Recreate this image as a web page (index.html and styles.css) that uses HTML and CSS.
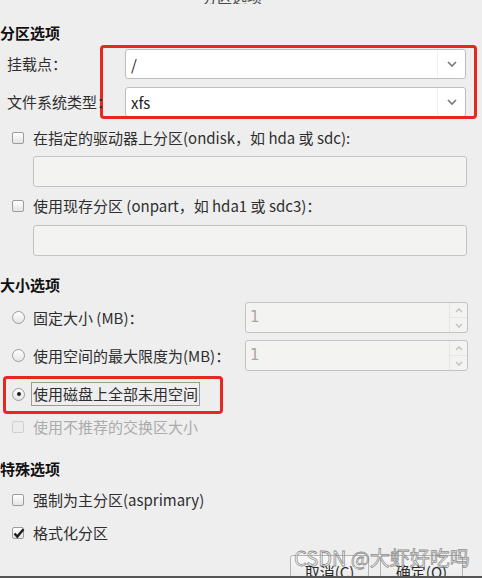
FILE: index.html
```html
<!DOCTYPE html>
<html lang="zh-CN">
<head>
<meta charset="utf-8">
<title>分区选项</title>
<link rel="stylesheet" href="styles.css">
</head>
<body>
<div class="window">
  <div class="title"><span>分区选项</span></div>

  <div class="heading h-part">分区选项</div>
  <div class="form">
    <div class="flabel">挂载点：</div>
    <div class="combo"><span class="cv">/</span><span class="carrow"><svg width="10" height="6" viewBox="0 0 10 6"><path d="M1 1 L5 5 L9 1" fill="none" stroke="#7a7a7a" stroke-width="1.7"/></svg></span></div>
    <div class="flabel">文件系统类型：</div>
    <div class="combo"><span class="cv">xfs</span><span class="carrow"><svg width="10" height="6" viewBox="0 0 10 6"><path d="M1 1 L5 5 L9 1" fill="none" stroke="#7a7a7a" stroke-width="1.7"/></svg></span></div>
    <div class="mark mark-form"></div>
  </div>

  <div class="opt r-ondisk"><span class="cb"></span><span class="lbl">在指定的驱动器上分区(ondisk，如 hda 或 sdc):</span></div>
  <div class="entry e1"></div>
  <div class="opt r-onpart"><span class="cb"></span><span class="lbl">使用现存分区 (onpart，如 hda1 或 sdc3)：</span></div>
  <div class="entry e2"></div>

  <div class="heading h-size">大小选项</div>
  <div class="size-row s1">
    <div class="opt"><span class="rb"></span><span class="lbl">固定大小 (MB)：</span></div>
    <div class="spin"><span class="sv">1</span><span class="sbtn"><span class="up"><svg width="8" height="5" viewBox="0 0 8 5"><path d="M1 4 L4 1 L7 4" fill="none" stroke="#c4c4c4" stroke-width="1.5"/></svg></span><span class="down"><svg width="8" height="5" viewBox="0 0 8 5"><path d="M1 1 L4 4 L7 1" fill="none" stroke="#c4c4c4" stroke-width="1.5"/></svg></span></span></div>
  </div>
  <div class="size-row s2">
    <div class="opt"><span class="rb"></span><span class="lbl">使用空间的最大限度为(MB)：</span></div>
    <div class="spin"><span class="sv">1</span><span class="sbtn"><span class="up"><svg width="8" height="5" viewBox="0 0 8 5"><path d="M1 4 L4 1 L7 4" fill="none" stroke="#c4c4c4" stroke-width="1.5"/></svg></span><span class="down"><svg width="8" height="5" viewBox="0 0 8 5"><path d="M1 1 L4 4 L7 1" fill="none" stroke="#c4c4c4" stroke-width="1.5"/></svg></span></span></div>
  </div>
  <div class="opt r-all"><span class="rb on"></span><span class="lbl focus">使用磁盘上全部未用空间</span><div class="mark mark-all"></div></div>
  <div class="opt r-swap disabled"><span class="cb"></span><span class="lbl">使用不推荐的交换区大小</span></div>

  <div class="heading h-special">特殊选项</div>
  <div class="opt r-primary"><span class="cb"></span><span class="lbl">强制为主分区(asprimary)</span></div>
  <div class="opt r-format"><span class="cb on"><svg width="14" height="13" viewBox="0 0 14 13"><path d="M2.5 6.5 L5.3 9.6 L11.5 2.2" fill="none" stroke="#1e1e1e" stroke-width="2.4"/></svg></span><span class="lbl">格式化分区</span></div>

  <div class="buttons">
    <div class="btn b-cancel">取消(C)</div>
    <div class="btn b-ok">确定(O)</div>
  </div>

  <div class="watermark">CSDN @大虾好吃吗</div>
</div>
<div class="edge"></div>
</body>
</html>
```

FILE: styles.css
```css
html, body {
  margin: 0;
  padding: 0;
}
body {
  width: 482px;
  height: 578px;
  overflow: hidden;
  background: #eeeeee;
  font-family: "Noto Sans CJK SC", "DejaVu Sans", sans-serif;
  font-size: 15px;
  color: #2e2e2e;
}
.window {
  position: relative;
  height: 576px;
  overflow: hidden;
}
.title {
  height: 4px;
  overflow: hidden;
  display: flex;
  align-items: flex-end;
  justify-content: center;
  padding-right: 18px;
  color: #4a4a4a;
  line-height: 15px;
}
.heading {
  font-weight: bold;
  color: #111;
  line-height: 20px;
  height: 20px;
}
.h-part { margin-top: 19px; }
.h-size { margin-top: 19px; }
.h-special { margin-top: 21px; }

.form {
  position: relative;
  display: grid;
  grid-template-columns: 125px 341px;
  grid-auto-rows: 30px;
  row-gap: 8px;
  margin-top: 6px;
}
.flabel {
  padding-left: 7px;
  line-height: 30px;
  white-space: nowrap;
  position: relative;
  z-index: 2;
}
.combo {
  box-sizing: border-box;
  display: flex;
  align-items: center;
  background: #fff;
  border: 1px solid #bdbdbd;
  border-radius: 3px;
}
.cv {
  flex: 1;
  padding-left: 5px;
  color: #222;
}
.carrow {
  width: 27px;
  height: 28px;
  display: flex;
  align-items: center;
  justify-content: center;
  border-left: 1px solid #f0f0f0;
}
.mark {
  position: absolute;
  box-sizing: border-box;
  border: 3px solid #e8271f;
  border-radius: 4px;
  pointer-events: none;
}
.mark-form {
  left: 100px;
  top: -4px;
  width: 377px;
  height: 74px;
  z-index: 1;
}

.opt {
  display: flex;
  align-items: center;
  height: 22px;
  padding-left: 12px;
  white-space: nowrap;
}
.cb, .rb {
  box-sizing: border-box;
  flex: 0 0 auto;
  position: relative;
  width: 12px;
  height: 12px;
  border: 1px solid #9c9c9c;
  background: linear-gradient(#ffffff, #e4e4e4);
}
.cb { border-radius: 2px; margin-right: 7px; }
.rb {
  width: 13px;
  height: 13px;
  border-radius: 50%;
  margin-right: 6px;
}
.rb.on::after {
  content: "";
  position: absolute;
  left: 3.5px;
  top: 3.5px;
  width: 4px;
  height: 4px;
  border-radius: 50%;
  background: #1e1e1e;
}
.cb svg {
  position: absolute;
  left: -1px;
  top: -1px;
}
.lbl {
  border: 1px solid transparent;
  padding: 1px 1px;
  line-height: 20px;
}
.lbl.focus {
  border-color: #9a9a9a;
}
.disabled .cb {
  border-color: #cfcfcf;
  background: #ececec;
}
.disabled .lbl { color: #ababab; }

.r-ondisk { margin-top: 10px; }
.r-onpart { margin-top: 8px; }
.entry {
  box-sizing: border-box;
  margin-left: 33px;
  width: 434px;
  height: 31px;
  background: #f3f3f2;
  border: 1px solid #c3c3c3;
  border-radius: 3px;
}
.e1 { margin-top: 7px; }
.e2 { margin-top: 8px; }

.size-row {
  display: grid;
  grid-template-columns: 245px 223px;
  height: 31px;
  align-items: center;
}
.s1 { margin-top: 7px; }
.s2 { margin-top: 7px; }
.spin {
  box-sizing: border-box;
  height: 31px;
  display: flex;
  background: #f3f3f2;
  border: 1px solid #c3c3c3;
  border-radius: 3px;
}
.sv {
  flex: 1;
  padding-left: 4px;
  line-height: 29px;
  color: #a8a8a8;
  font-family: "DejaVu Sans", sans-serif;
  font-size: 15px;
}
.sbtn {
  width: 17px;
  display: flex;
  flex-direction: column;
  border-left: 1px solid #e4e4e4;
}
.sbtn .up, .sbtn .down {
  flex: 1;
  display: flex;
  align-items: center;
  justify-content: center;
}
.sbtn .up { border-bottom: 1px solid #e6e6e6; }

.r-all {
  position: relative;
  margin-top: 11px;
  height: 24px;
}
.mark-all {
  left: 3px;
  top: -6px;
  width: 220px;
  height: 38px;
}
.r-swap { margin-top: 10px; }
.r-primary { margin-top: 10px; }
.r-format { margin-top: 11px; }

.buttons {
  display: flex;
  gap: 11px;
  margin-top: 11px;
  padding-left: 290px;
}
.btn {
  box-sizing: border-box;
  height: 30px;
  line-height: 28px;
  text-align: center;
  border: 1px solid #b4b4b4;
  border-radius: 3px;
  background: linear-gradient(#f8f8f8, #e6e6e6);
  color: #2b2b2b;
  padding-top: 2px;
}
.b-cancel { width: 79px; }
.b-ok { width: 83px; }

.watermark {
  position: absolute;
  left: 294px;
  top: 545px;
  font-family: "Noto Sans CJK SC", sans-serif;
  font-size: 20px;
  line-height: 26px;
  color: rgba(255, 255, 255, 0.6);
  -webkit-text-stroke: 0.8px rgba(95, 95, 95, 0.7);
  white-space: nowrap;
}
.edge {
  height: 2px;
  background: #555555;
}
```
